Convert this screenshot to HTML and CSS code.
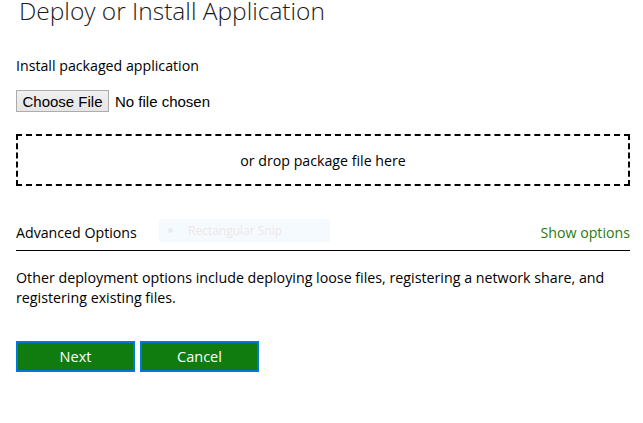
FILE: index.html
```html
<!DOCTYPE html>
<html>
<head>
<meta charset="utf-8">
<link rel="stylesheet" href="styles.css">
</head>
<body>
<div class="page">
  <h1 class="title">Deploy or Install Application</h1>
  <p class="label">Install packaged application</p>
  <div class="file-row">
    <button class="file-btn" type="button">Choose File</button>
    <span class="file-status">No file chosen</span>
  </div>
  <div class="dropzone">or drop package file here</div>
  <div class="advanced">
    <span class="adv-title">Advanced Options</span>
    <span class="snip"><span class="snip-dot"></span><span class="snip-text">Rectangular Snip</span></span>
    <a class="adv-link">Show options</a>
  </div>
  <p class="note">Other deployment options include deploying loose files, registering a network share, and registering existing files.</p>
  <div class="actions">
    <button class="action" type="button">Next</button>
    <button class="action" type="button">Cancel</button>
  </div>
</div>
</body>
</html>
```
FILE: styles.css
```css
html, body {
  margin: 0;
  padding: 0;
  background: #ffffff;
}
body {
  font-family: "Open Sans", "Noto Sans", sans-serif;
  color: #000;
  overflow: hidden;
}
.page {
  width: 614px;
  padding-left: 16px;
  display: flex;
  flex-direction: column;
}
.title {
  font-weight: 300;
  font-size: 24.5px;
  line-height: 28px;
  margin: -3px 0 0 3px;
  color: #1a1a1a;
}
.label {
  font-size: 14.2px;
  line-height: 20px;
  margin: 31px 0 0 0;
}
.file-row {
  display: flex;
  align-items: center;
  margin-top: 14px;
  height: 22px;
}
.file-btn {
  font-family: "Liberation Sans", Arial, sans-serif;
  font-size: 15px;
  height: 22px;
  width: 93px;
  padding: 0;
  border: 1px solid #acacac;
  border-radius: 0;
  background: linear-gradient(#f0f0f0, #e5e5e5);
  color: #000;
}
.file-status {
  font-family: "Liberation Sans", Arial, sans-serif;
  font-size: 15px;
  margin-left: 6px;
}
.dropzone {
  margin-top: 22px;
  height: 48px;
  border: 2px dashed #000;
  display: flex;
  align-items: center;
  justify-content: center;
  font-size: 14.2px;
}
.advanced {
  position: relative;
  margin-top: 34px;
  display: flex;
  justify-content: space-between;
  align-items: center;
  height: 25px;
  border-bottom: 1px solid #000;
  padding-bottom: 5px;
  font-size: 14.2px;
}
.adv-link {
  color: #2b7a0b;
}
.snip {
  position: absolute;
  left: 143px;
  top: -1px;
  width: 171px;
  height: 23px;
  background: #f5faff;
  display: flex;
  align-items: center;
  font-size: 12px;
  color: #efe6e6;
}
.snip-dot {
  width: 5px;
  height: 5px;
  border-radius: 50%;
  background: #ebebeb;
  margin-left: 9px;
}
.snip-text {
  margin-left: 15px;
}
.note {
  font-size: 14.25px;
  line-height: 20px;
  margin: 17px 0 0 0;
}
.actions {
  display: flex;
  gap: 5px;
  margin-top: 33px;
}
.action {
  width: 119px;
  height: 31px;
  background: #107c10;
  border: 2px solid #0078d7;
  color: #fff;
  font-family: "Open Sans", "Noto Sans", sans-serif;
  font-size: 14.5px;
  padding: 0;
}
```
